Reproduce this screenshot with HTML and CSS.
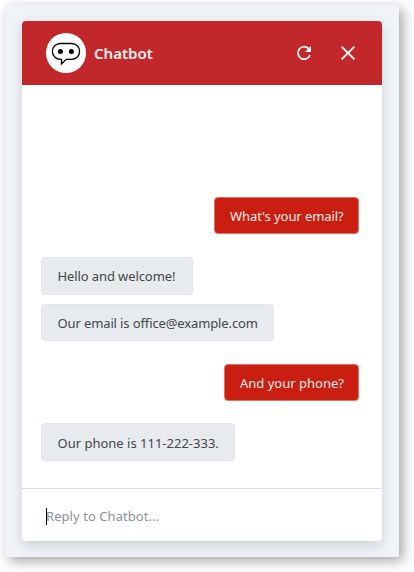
FILE: index.html
```html
<!DOCTYPE html>
<html lang="en">
<head>
<meta charset="utf-8">
<title>Chatbot</title>
<link rel="stylesheet" href="styles.css">
</head>
<body>
<main class="page">
  <section class="chat">
    <header class="chat-header">
      <div class="avatar">
        <svg width="40" height="40" viewBox="0 0 40 40" fill="none">
          <path d="M15.5 26.3H14.3A7.9 7.9 0 0 1 14.3 10.5H25.7A7.9 7.9 0 0 1 25.7 26.3H20.2L15.5 30.9Z" stroke="#000" stroke-width="1.3"/>
          <circle cx="14.4" cy="18.5" r="2.5" fill="#000"/>
          <circle cx="25.4" cy="18.5" r="2.5" fill="#000"/>
        </svg>
      </div>
      <h1 class="title">Chatbot</h1>
      <button class="icon-button" aria-label="Restart">
        <svg width="20" height="20" viewBox="0 0 20 20" fill="none">
          <path d="M14.6 5.6A6.2 6.2 0 1 0 16 12" stroke="#fff" stroke-width="1.7"/>
          <path d="M17 3V9H11Z" fill="#fff"/>
        </svg>
      </button>
      <button class="icon-button" aria-label="Close">
        <svg width="20" height="20" viewBox="0 0 20 20" fill="none">
          <path d="M3.6 3.6L16.4 16.4M16.4 3.6L3.6 16.4" stroke="#fff" stroke-width="1.8"/>
        </svg>
      </button>
    </header>
    <div class="messages">
      <div class="bubble user email-question">What's your email?</div>
      <div class="bubble bot greeting">Hello and welcome!</div>
      <div class="bubble bot email-answer">Our email is office@example.com</div>
      <div class="bubble user phone-question">And your phone?</div>
      <div class="bubble bot phone-answer">Our phone is 111-222-333.</div>
    </div>
    <footer class="composer">
      <span class="caret"></span>
      <span class="placeholder">Reply to Chatbot...</span>
    </footer>
  </section>
</main>
</body>
</html>
```

FILE: styles.css
```css
* {
  box-sizing: border-box;
}

body {
  margin: 0;
  height: 572px;
  padding: 5px;
  overflow: hidden;
  background: #fff;
  font-family: "Noto Sans", "Open Sans", sans-serif;
  font-size: 13px;
}

.page {
  width: 394px;
  height: 552px;
  padding: 16px 17px;
  background: #f0f4f8;
  box-shadow: 4px 4px 12px rgba(0, 0, 0, 0.36);
}

.chat {
  display: flex;
  flex-direction: column;
  width: 360px;
  height: 520px;
  border-radius: 4px;
  background: #fff;
  box-shadow: 0 5px 14px rgba(0, 0, 0, 0.15);
}

.chat-header {
  display: flex;
  align-items: center;
  height: 64px;
  padding: 0 24px;
  border-radius: 4px 4px 0 0;
  background: #c2272c;
  color: #fff;
}

.avatar {
  width: 40px;
  height: 40px;
  border-radius: 50%;
  background: #fff;
}

.avatar svg,
.icon-button svg {
  display: block;
}

.title {
  flex: 1;
  margin: 0 0 0 8px;
  color: #f8eff0;
  font-size: 15px;
  font-weight: 600;
  line-height: 20px;
}

.icon-button {
  width: 20px;
  height: 20px;
  margin-left: 24px;
  padding: 0;
  border: 0;
  background: none;
}

.messages {
  display: flex;
  flex: 1;
  flex-direction: column;
  align-items: flex-start;
  padding: 112px 23px 0 19px;
}

.bubble {
  border-radius: 4px;
  white-space: nowrap;
}

.user {
  align-self: flex-end;
  height: 37px;
  padding: 0 15px;
  border: 1px solid #de7168;
  background: #ca1e10;
  color: #fbebea;
  line-height: 36px;
}

.bot {
  height: 38px;
  padding: 0 16px 0 15.5px;
  border: 1px solid #e1e5e9;
  background: #e7ebee;
  color: #434649;
  line-height: 36px;
}

.email-question {
  width: 145px;
  letter-spacing: -0.07px;
}

.greeting {
  width: 152px;
  margin-top: 23px;
  letter-spacing: -0.1px;
}

.email-answer {
  width: 233px;
  height: 37px;
  margin-top: 9px;
  letter-spacing: -0.12px;
  line-height: 37px;
}

.phone-question {
  width: 135px;
  margin-top: 23px;
}

.phone-answer {
  width: 194px;
  margin-top: 22px;
  line-height: 38px;
}

.composer {
  display: flex;
  align-items: center;
  height: 53px;
  padding: 2px 24px 0;
  border-top: 1px solid #dddfe5;
  color: #8d9296;
}

.caret {
  width: 1px;
  height: 17px;
  margin-right: -1px;
  background: #000;
}

.placeholder {
  letter-spacing: 0.06px;
}
```
